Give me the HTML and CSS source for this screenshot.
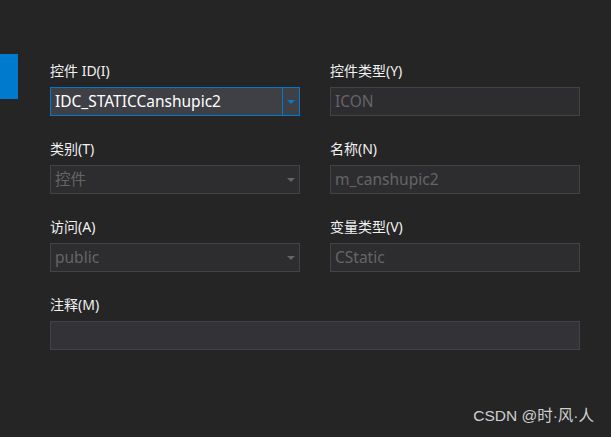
FILE: index.html
```html
<!DOCTYPE html>
<html lang="zh-CN">
<head>
<meta charset="utf-8">
<link rel="stylesheet" href="styles.css">
</head>
<body>
<div class="page">
  <div class="side"><div class="tab-indicator"></div></div>
  <div class="form">
    <div class="field">
      <div class="label">控件 ID(I)</div>
      <div class="combo active">
        <span class="value">IDC_STATICCanshupic2</span>
        <span class="btn"><span class="arrow"></span></span>
      </div>
    </div>
    <div class="field">
      <div class="label">控件类型(Y)</div>
      <div class="box disabled"><span class="value">ICON</span></div>
    </div>
    <div class="field">
      <div class="label">类别(T)</div>
      <div class="combo disabled">
        <span class="value">控件</span>
        <span class="btn"><span class="arrow"></span></span>
      </div>
    </div>
    <div class="field">
      <div class="label">名称(N)</div>
      <div class="box disabled"><span class="value">m_canshupic2</span></div>
    </div>
    <div class="field">
      <div class="label">访问(A)</div>
      <div class="combo disabled">
        <span class="value">public</span>
        <span class="btn"><span class="arrow"></span></span>
      </div>
    </div>
    <div class="field">
      <div class="label">变量类型(V)</div>
      <div class="box disabled"><span class="value">CStatic</span></div>
    </div>
    <div class="field wide">
      <div class="label">注释(M)</div>
      <div class="box note"></div>
    </div>
  </div>
</div>
<div class="watermark">CSDN @时·风·人</div>
</body>
</html>
```

FILE: styles.css
```css
html, body {
  margin: 0;
  padding: 0;
  background: #252526;
  width: 611px;
  height: 437px;
  overflow: hidden;
}
body {
  font-family: "Noto Sans", "Noto Sans CJK SC", sans-serif;
  color: #f1f1f1;
  position: relative;
}
.page {
  display: flex;
  align-items: flex-start;
}
.side {
  width: 18px;
  padding-top: 54px;
}
.tab-indicator {
  width: 18px;
  height: 45px;
  background: #007acc;
}
.form {
  margin-left: 32px;
  padding-top: 61px;
  display: grid;
  grid-template-columns: 250px 250px;
  column-gap: 30px;
  row-gap: 23px;
}
.field {
  display: flex;
  flex-direction: column;
  gap: 6px;
}
.field.wide {
  grid-column: 1 / span 2;
}
.label {
  font-size: 14px;
  line-height: 20px;
  height: 20px;
  color: #f1f1f1;
  white-space: nowrap;
}
.combo, .box {
  box-sizing: border-box;
  height: 29px;
  display: flex;
  align-items: stretch;
  border: 1px solid #434346;
  background: #2d2d30;
}
.value {
  flex: 1;
  font-size: 15.5px;
  line-height: 27px;
  padding-left: 4px;
  white-space: nowrap;
  overflow: hidden;
}
.combo.active {
  border-color: #007acc;
  background: #3f3f46;
}
.combo.active .value {
  color: #ffffff;
}
.disabled .value {
  color: #656565;
}
.btn {
  width: 16px;
  display: flex;
  align-items: center;
  justify-content: center;
}
.combo.active .btn {
  border-left: 1px solid #007acc;
}
.arrow {
  width: 0;
  height: 0;
  border-left: 4px solid transparent;
  border-right: 4px solid transparent;
  border-top: 4px solid #007acc;
  margin-top: 1px;
}
.disabled .arrow {
  border-top-color: #656565;
}
.box.note {
  background: #333337;
  border-color: #434346;
}
.watermark {
  position: absolute;
  right: 17px;
  top: 406px;
  font-family: "Liberation Sans", "Noto Sans CJK SC", sans-serif;
  font-size: 15.5px;
  line-height: 20px;
  color: #cfcfcf;
  white-space: nowrap;
}
```
